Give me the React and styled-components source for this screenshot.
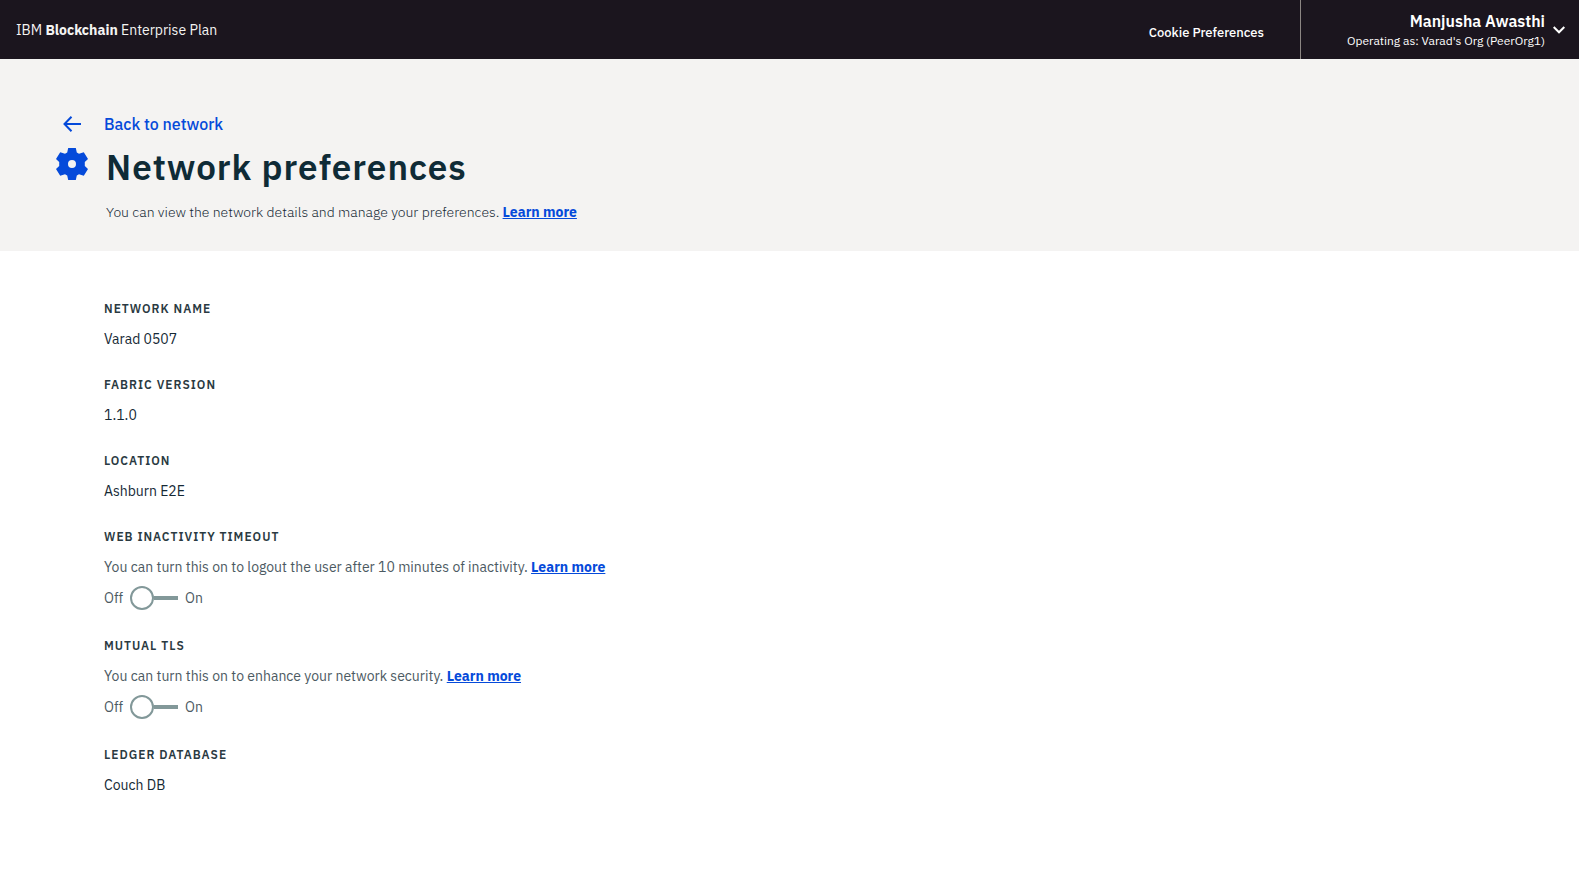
import React from "react";
import styled, { createGlobalStyle } from "styled-components";

const GlobalStyle = createGlobalStyle`
  *, *::before, *::after { box-sizing: border-box; }
  body {
    margin: 0;
    background: #ffffff;
    color: #152935;
    font-family: "IBM Plex Sans", Roboto, "Liberation Sans", sans-serif;
    font-size: 14px;
    line-height: 20px;
  }
  button { font: inherit; }
`;

const TopBar = styled.header`
  display: flex;
  align-items: stretch;
  justify-content: space-between;
  min-height: 59px;
  padding-left: 16px;
  background: #1b151e;
  color: #ffffff;
`;

const Brand = styled.a`
  align-self: center;
  color: #f4f3f2;
  text-decoration: none;
`;

const BarActions = styled.div`
  display: flex;
`;

const CookieButton = styled.button`
  padding: 6px 36px 0 0;
  border: 0;
  background: none;
  color: inherit;
  font-size: 13px;
  font-weight: 500;
  line-height: 20px;
  cursor: pointer;
`;

const AccountButton = styled.button`
  display: flex;
  align-items: center;
  justify-content: flex-end;
  gap: 8px;
  min-width: 279px;
  padding: 0 14px 0 0;
  border: 0;
  border-left: 1px solid #8c8683;
  background: none;
  color: inherit;
  text-align: right;
  cursor: pointer;
`;

const AccountText = styled.span`
  display: flex;
  flex-direction: column;
  padding-top: 2px;
`;

const AccountName = styled.span`
  font-size: 16px;
  font-weight: 600;
  line-height: 20px;
`;

const AccountOrg = styled.span`
  font-size: 12px;
  font-weight: 400;
  line-height: 20px;
`;

const Hero = styled.section`
  padding: 53px 56px 29px;
  background: #f4f3f2;
`;

const BackLink = styled.a`
  display: flex;
  align-items: center;
  gap: 16px;
  color: #054ada;
  font-size: 16px;
  font-weight: 500;
  line-height: 24px;
  text-decoration: none;
`;

const IconCell = styled.span`
  display: flex;
  flex: none;
  justify-content: center;
  width: 32px;
  color: #054ada;
`;

const TitleRow = styled.div`
  display: flex;
  align-items: flex-start;
  gap: 18px;
  padding-top: 7px;

  ${IconCell} {
    padding-top: 5px;
  }
`;

const Title = styled.h1`
  margin: 0;
  color: #0f2b36;
  font-size: 35px;
  font-weight: 600;
  line-height: 48px;
  letter-spacing: 1px;
`;

const Lead = styled.p`
  margin: 11px 0 0;
  color: #152935;
  font-weight: 300;
`;

const LearnMore = styled.a`
  color: #054ada;
  font-weight: 700;
`;

const Settings = styled.main`
  display: flex;
  flex-direction: column;
  gap: 28px;
  padding: 50px 104px;
`;

const Setting = styled.section``;

const SettingLabel = styled.h2`
  margin: 0 0 12px;
  color: #2a3a42;
  font-size: 12px;
  font-weight: 600;
  line-height: 16px;
  letter-spacing: 1px;
  text-transform: uppercase;
`;

const SettingValue = styled.p`
  margin: 0;
`;

const SettingHelp = styled.p`
  margin: 0 0 9px;
  color: #4c5a62;
`;

const Toggle = styled.label`
  display: inline-flex;
  align-items: center;
  gap: 7px;
  height: 24px;
  color: #4c5a62;
  vertical-align: top;
`;

const Switch = styled.input`
  display: flex;
  align-items: center;
  width: 48px;
  height: 24px;
  margin: 0;
  appearance: none;
  cursor: pointer;

  &::before {
    content: "";
    width: 24px;
    height: 24px;
    border: 2px solid #829899;
    border-radius: 50%;
    background: #ffffff;
  }
  &::after {
    content: "";
    flex: 1;
    height: 4px;
    background: #829899;
  }
  &:checked {
    flex-direction: row-reverse;
  }
`;

const ArrowIcon = () => (
  <svg width="18" height="16" viewBox="0 0 18 16" fill="none" stroke="currentColor" strokeWidth="2" aria-hidden="true">
    <path d="M8.5 .8 1.5 8l7 7.2M1.5 8H18" />
  </svg>
);

const GearIcon = () => (
  <svg width="32" height="32" viewBox="0 0 32 32" fill="currentColor" aria-hidden="true">
    <path
      fillRule="evenodd"
      d="M12.200 0h7.600l1 4.600 2.200 1.200 4.800-1.600L32 11l-3.200 3v4l3.200 3-4.200 6.800-4.800-1.600-2.200 1.200-1 4.600h-7.600l-1-4.600L9 26.200l-4.800 1.600L0 21l3.200-3v-4L0 11l4.200-6.800L9 5.800l2.200-1.200zM16 12a4 4 0 1 0 0 8 4 4 0 0 0 0-8z"
    />
  </svg>
);

const ChevronIcon = () => (
  <svg width="12" height="8" viewBox="0 0 12 8" fill="none" stroke="currentColor" strokeWidth="2" aria-hidden="true">
    <path d="M.7 1 6 6.300 11.300 1" />
  </svg>
);

const settings = [
  { label: "Network name", value: "Varad 0507" },
  { label: "Fabric version", value: "1.1.0" },
  { label: "Location", value: "Ashburn E2E" },
  {
    label: "Web inactivity timeout",
    help: "You can turn this on to logout the user after 10 minutes of inactivity.",
  },
  { label: "Mutual TLS", help: "You can turn this on to enhance your network security." },
  { label: "Ledger database", value: "Couch DB" },
];

export default function App() {
  return (
    <>
      <GlobalStyle />
      <TopBar>
        <Brand href="#home">
          IBM <b>Blockchain</b> Enterprise Plan
        </Brand>
        <BarActions>
          <CookieButton type="button">Cookie Preferences</CookieButton>
          <AccountButton type="button" aria-haspopup="menu">
            <AccountText>
              <AccountName>Manjusha Awasthi</AccountName>
              <AccountOrg>Operating as: Varad's Org (PeerOrg1)</AccountOrg>
            </AccountText>
            <ChevronIcon />
          </AccountButton>
        </BarActions>
      </TopBar>
      <Hero>
        <BackLink href="#network">
          <IconCell>
            <ArrowIcon />
          </IconCell>
          <span>Back to network</span>
        </BackLink>
        <TitleRow>
          <IconCell>
            <GearIcon />
          </IconCell>
          <div>
            <Title>Network preferences</Title>
            <Lead>
              You can view the network details and manage your preferences. <LearnMore href="#about">Learn more</LearnMore>
            </Lead>
          </div>
        </TitleRow>
      </Hero>
      <Settings>
        {settings.map(({ label, value, help }) => (
          <Setting key={label}>
            <SettingLabel>{label}</SettingLabel>
            {value && <SettingValue>{value}</SettingValue>}
            {help && (
              <>
                <SettingHelp>
                  {help} <LearnMore href="#docs">Learn more</LearnMore>
                </SettingHelp>
                <Toggle>
                  <span>Off</span>
                  <Switch type="checkbox" role="switch" aria-label={label} />
                  <span>On</span>
                </Toggle>
              </>
            )}
          </Setting>
        ))}
      </Settings>
    </>
  );
}
